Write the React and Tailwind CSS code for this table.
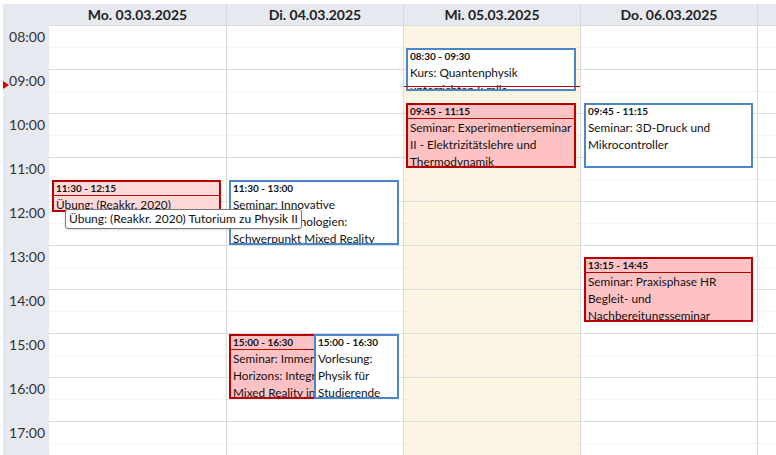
const hours = ['08:00', '09:00', '10:00', '11:00', '12:00', '13:00', '14:00', '15:00', '16:00', '17:00'];

const days = [
  {
    label: 'Mo. 03.03.2025',
    width: 'w-[178px]',
    events: [
      { start: '11:30', end: '12:15', kind: 'redLight', title: 'Übung: (Reakkr. 2020) Tutorium zu Physik II', left: 3, width: 169, pr: 'pr-[12px]' },
    ],
  },
  {
    label: 'Di. 04.03.2025',
    width: 'w-[177px]',
    events: [
      { start: '11:30', end: '13:00', kind: 'blue', title: 'Seminar: Innovative Bildungstechnologien: Schwerpunkt Mixed Reality', left: 2, width: 170 },
      { start: '15:00', end: '16:30', kind: 'red', title: 'Seminar: Immersive Horizons: Integrating Mixed Reality in Education', left: 2, width: 170, pr: 'pr-[36px]' },
      { start: '15:00', end: '16:30', kind: 'blue', title: 'Vorlesung: Physik für Studierende', left: 87, width: 85 },
    ],
  },
  {
    label: 'Mi. 05.03.2025',
    width: 'w-[177px]',
    today: true,
    events: [
      { start: '08:30', end: '09:30', kind: 'blue', title: 'Kurs: Quantenphysik unterrichten I: mlla', left: 2, width: 170 },
      { start: '09:45', end: '11:15', kind: 'red', title: 'Seminar: Experimentierseminar II - Elektrizitätslehre und Thermodynamik', left: 2, width: 170 },
    ],
  },
  {
    label: 'Do. 06.03.2025',
    width: 'w-[177px]',
    events: [
      { start: '09:45', end: '11:15', kind: 'blue', title: 'Seminar: 3D-Druck und Mikrocontroller', left: 3, width: 169 },
      { start: '13:15', end: '14:45', kind: 'red', title: 'Seminar: Praxisphase HR Begleit- und Nachbereitungsseminar', left: 3, width: 169 },
    ],
  },
  { label: 'Fr. 07.03.2025', width: 'w-[177px]', events: [] },
];

const styles = {
  blue: { box: 'border-[#4a86c8] bg-white', head: 'border-transparent' },
  red: { box: 'border-[#b80000] bg-[#ffc2c4]', head: 'border-[#b80000]' },
  redLight: { box: 'border-[#b80000] bg-[#ffd9da]', head: 'border-[#b80000]' },
};

// minutes since 08:00 -> px (44px per hour)
const toPx = (t) => {
  const [h, m] = t.split(':').map(Number);
  return ((h - 8) * 60 + m) * 44 / 60;
};

function Event({ ev }) {
  const top = toPx(ev.start) + 1;
  const height = toPx(ev.end) - toPx(ev.start) - 1;
  const s = styles[ev.kind];
  return (
    <div
      className={`absolute z-10 overflow-hidden border-2 ${s.box}`}
      style={{ top, height, left: ev.left, width: ev.width }}
    >
      <div className={`h-[14px] border-b px-[2px] text-[10px] font-bold leading-[13px] text-[#111] ${s.head}`}>
        {ev.start} - {ev.end}
      </div>
      <div className={`pl-[2px] text-[11.8px] leading-[17px] text-[#111] ${ev.pr || 'pr-0'}`}>
        {ev.title}
      </div>
    </div>
  );
}

export default function App() {
  return (
    <div className="relative h-[455px] w-[776px] overflow-hidden bg-white pl-[3px] pt-[4px] font-['Lato',sans-serif] text-[#222]">
      <div className="flex">
        {/* time column */}
        <div className="relative w-[46px] shrink-0 bg-[#e6e9f0]">
          <div className="h-[21px]" />
          {hours.map((h) => (
            <div key={h} className="h-[44px] pr-[4px] pt-[3px] text-right text-[14px] leading-[17px] text-[#333]">
              {h}
            </div>
          ))}
          <div className="absolute left-0 top-[77px] h-0 w-0 border-y-[4px] border-l-[6px] border-y-transparent border-l-[#e00000]" />
        </div>

        {days.map((day) => (
          <div key={day.label} className={`${day.width} shrink-0`}>
            <div className="h-[21px] truncate border-r border-[#d3d6de] bg-[#e6e9f0] text-center text-[14px] font-bold leading-[21px] text-[#222]">
              {day.label}
            </div>
            <div className={`relative border-r border-[#dadada] ${day.today ? 'bg-[#fdf5e4]' : 'bg-white'}`}>
              {hours.map((h) => (
                <div key={h} className="h-[44px] border-t border-[#dcdcdc]">
                  <div className="h-[22px] border-b border-dotted border-[#ececec]" />
                </div>
              ))}
              {day.events.map((ev, i) => (
                <Event key={i} ev={ev} />
              ))}
              {day.today && <div className="absolute left-0 right-0 top-[61px] z-20 h-px bg-[#c00000]" />}
            </div>
          </div>
        ))}
      </div>

      {/* tooltip */}
      <div className="absolute left-[65px] top-[209px] z-30 rounded-[3px] border border-[#777] bg-white px-[3px] text-[12px] leading-[18px] text-[#111] shadow-sm">
        Übung: (Reakkr. 2020) Tutorium zu Physik II
      </div>
    </div>
  );
}
